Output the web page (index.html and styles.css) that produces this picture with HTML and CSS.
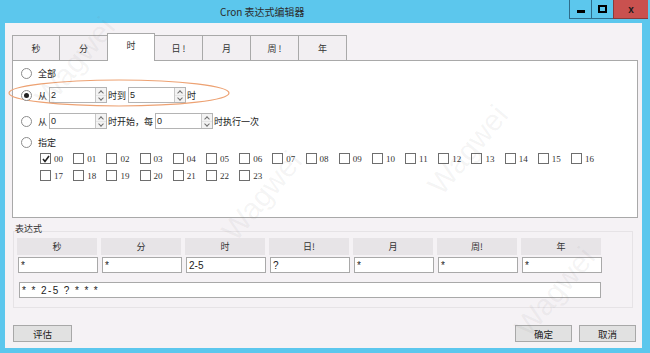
FILE: index.html
```html
<!DOCTYPE html>
<html lang="zh">
<head>
  <meta charset="UTF-8" />
  <title>Cron 表达式编辑器</title>
  <link rel="stylesheet" href="styles.css">
</head>
<body>
  <div class="window">
    <div class="titlebar">
      <span class="title">Cron 表达式编辑器</span>
      <div class="controls">
        <span class="ctl">
          <svg width="8" height="8" viewBox="0 0 8 8"><rect x="0" y="5" width="8" height="3" fill="#000"/></svg>
        </span>
        <span class="ctl">
          <svg width="9" height="8" viewBox="0 0 9 8"><rect x="1" y="1" width="7" height="6" fill="none" stroke="#000" stroke-width="2"/></svg>
        </span>
        <span class="ctl ctl-close">x</span>
      </div>
    </div>

    <div class="client">
      <div class="tabs">
        <div class="tab">秒</div>
        <div class="tab">分</div>
        <div class="tab active">时</div>
        <div class="tab">日 !</div>
        <div class="tab">月</div>
        <div class="tab">周 !</div>
        <div class="tab">年</div>
      </div>

      <div class="panel">
        <svg class="mark" width="224" height="30" viewBox="0 0 224 30">
          <ellipse cx="112" cy="15" rx="110" ry="13" fill="none" stroke="#eda273" stroke-width="1.2"/>
        </svg>

        <div class="row row-all">
          <span class="radio"></span>
          <span class="lbl">全部</span>
        </div>

        <div class="row row-range">
          <span class="radio checked"></span>
          <span class="lbl">从</span>
          <span class="spin"><span class="spin-val">2</span><span class="spin-btn"></span></span>
          <span class="lbl">时到</span>
          <span class="spin"><span class="spin-val">5</span><span class="spin-btn"></span></span>
          <span class="lbl">时</span>
        </div>

        <div class="row row-step">
          <span class="radio"></span>
          <span class="lbl">从</span>
          <span class="spin"><span class="spin-val">0</span><span class="spin-btn"></span></span>
          <span class="lbl">时开始，每</span>
          <span class="spin"><span class="spin-val">0</span><span class="spin-btn"></span></span>
          <span class="lbl">时执行一次</span>
        </div>

        <div class="row row-pick">
          <span class="radio"></span>
          <span class="lbl">指定</span>
        </div>

        <div class="checks">
          <label class="chk"><span class="box on"><svg width="8" height="8" viewBox="0 0 8 8"><path d="M1 4 L3 6.5 L7 1" fill="none" stroke="#222" stroke-width="1.6"/></svg></span>00</label>
          <label class="chk"><span class="box"></span>01</label>
          <label class="chk"><span class="box"></span>02</label>
          <label class="chk"><span class="box"></span>03</label>
          <label class="chk"><span class="box"></span>04</label>
          <label class="chk"><span class="box"></span>05</label>
          <label class="chk"><span class="box"></span>06</label>
          <label class="chk"><span class="box"></span>07</label>
          <label class="chk"><span class="box"></span>08</label>
          <label class="chk"><span class="box"></span>09</label>
          <label class="chk"><span class="box"></span>10</label>
          <label class="chk"><span class="box"></span>11</label>
          <label class="chk"><span class="box"></span>12</label>
          <label class="chk"><span class="box"></span>13</label>
          <label class="chk"><span class="box"></span>14</label>
          <label class="chk"><span class="box"></span>15</label>
          <label class="chk"><span class="box"></span>16</label>
          <label class="chk"><span class="box"></span>17</label>
          <label class="chk"><span class="box"></span>18</label>
          <label class="chk"><span class="box"></span>19</label>
          <label class="chk"><span class="box"></span>20</label>
          <label class="chk"><span class="box"></span>21</label>
          <label class="chk"><span class="box"></span>22</label>
          <label class="chk"><span class="box"></span>23</label>
        </div>
      </div>

      <div class="exp-label">表达式</div>
      <div class="group">
        <div class="cells">
          <div class="head">秒</div>
          <div class="head">分</div>
          <div class="head">时</div>
          <div class="head">日!</div>
          <div class="head">月</div>
          <div class="head">周!</div>
          <div class="head">年</div>
        </div>
        <div class="cells">
          <div class="field">*</div>
          <div class="field">*</div>
          <div class="field">2-5</div>
          <div class="field">?</div>
          <div class="field">*</div>
          <div class="field">*</div>
          <div class="field">*</div>
        </div>
        <div class="field full">* * 2-5 ? * * *</div>
      </div>

      <div class="buttons">
        <button class="btn">评估</button>
        <div class="right-btns">
          <button class="btn">确定</button>
          <button class="btn">取消</button>
        </div>
      </div>
    </div>

    <!-- faint watermark over the screenshot -->
    <span class="wm wm-1">Wagwei</span>
    <span class="wm wm-2">Wagwei</span>
    <span class="wm wm-3">Wagwei</span>
    <span class="wm wm-4">Wagwei</span>
  </div>
</body>
</html>
```

FILE: styles.css
```css
body {
  margin: 0;
  font-family: "Noto Sans CJK SC", "Liberation Sans", sans-serif;
  font-size: 9px;
  color: #222;
}
.window {
  position: relative;
  width: 650px;
  height: 353px;
  background-color: #5cc7ed;
  display: flex;
  flex-direction: column;
  overflow: hidden;
}
.titlebar {
  height: 23px;
  display: flex;
  align-items: flex-start;
}
.title {
  margin-left: 220px;
  margin-top: 5px;
  font-size: 10px;
  line-height: 14px;
  color: #2b2b2b;
}
.controls {
  margin-left: auto;
  margin-right: 2px;
  display: flex;
  height: 19px;
}
.ctl {
  width: 22px;
  height: 19px;
  box-sizing: border-box;
  border: 1px solid #2f6c8a;
  border-top: none;
  border-right: none;
  display: flex;
  align-items: center;
  justify-content: center;
}
.ctl-close {
  width: 35px;
  background-color: #c9514f;
  color: #1a1a1a;
  font-family: "Liberation Sans", sans-serif;
  font-weight: bold;
  font-size: 10px;
  border-color: #8a3a3a;
}
.client {
  flex: 1;
  margin: 0 8px 5px 5px;
  background-color: #f5f2f5;
  padding: 0 4px 0 7px;
  display: flex;
  flex-direction: column;
}
.tabs {
  display: flex;
  align-items: flex-end;
  height: 25px;
  margin-top: 12px;
}
.tab {
  width: 48px;
  height: 25px;
  box-sizing: border-box;
  border: 1px solid #a9a9a9;
  border-left: none;
  border-bottom: none;
  background-color: #f2eff2;
  display: flex;
  align-items: center;
  justify-content: center;
  color: #333;
}
.tab:first-child {
  border-left: 1px solid #a9a9a9;
}
.tab.active {
  height: 28px;
  background: white;
  margin-bottom: -1px;
  position: relative;
  z-index: 1;
  border-left: 1px solid #a9a9a9;
  margin-left: -1px;
  padding-bottom: 4px;
}
.panel {
  position: relative;
  height: 158px;
  box-sizing: border-box;
  border: 1px solid #a9a9a9;
  background: white;
  padding: 3px 0 0 8px;
}
.mark {
  position: absolute;
  left: -6px;
  top: 17px;
}
.row {
  display: flex;
  align-items: center;
  height: 18px;
}
.row-range { margin-top: 4px; }
.row-step { margin-top: 8px; }
.row-pick { margin-top: 3px; }
.radio {
  width: 9px;
  height: 9px;
  border: 1px solid #8c8c8c;
  border-radius: 50%;
  margin-right: 5px;
  position: relative;
  background: white;
}
.radio.checked::after {
  content: "";
  position: absolute;
  left: 2px;
  top: 2px;
  width: 5px;
  height: 5px;
  border-radius: 50%;
  background: #222;
}
.lbl {
  margin: 0 2px 0 1px;
}
.spin {
  width: 58px;
  height: 16px;
  box-sizing: border-box;
  border: 1px solid #b4b4b4;
  display: flex;
  background: white;
}
.spin-val {
  flex: 1;
  font-family: "Liberation Sans", sans-serif;
  font-size: 9px;
  line-height: 14px;
  padding-left: 1px;
}
.spin-btn {
  width: 10px;
  border-left: 1px solid #c8c8c8;
  background:
    linear-gradient(#e6e6e6, #e6e6e6) center / 10px 1px no-repeat,
    #f3f3f3;
  position: relative;
}
.spin-btn::before,
.spin-btn::after {
  content: "";
  position: absolute;
  left: 3px;
  width: 3px;
  height: 3px;
  border: solid #707070;
  border-width: 1px 0 0 1px;
}
.spin-btn::before {
  top: 3px;
  transform: rotate(45deg);
}
.spin-btn::after {
  top: 8px;
  transform: rotate(225deg);
}
.checks {
  display: grid;
  grid-template-columns: repeat(17, 33.2px);
  grid-auto-rows: 17px;
  margin-left: 19px;
  margin-top: -1px;
}
.chk {
  display: flex;
  align-items: center;
  font-family: "Liberation Serif", serif;
  font-size: 9px;
  color: #333;
}
.box {
  width: 9px;
  height: 9px;
  border: 1px solid #6e6e6e;
  background: white;
  margin-right: 3px;
  display: flex;
  align-items: center;
  justify-content: center;
}
.exp-label {
  margin-top: 5px;
  margin-left: 3px;
  line-height: 12px;
  color: #333;
  position: relative;
  z-index: 1;
}
.group {
  margin-top: -4px;
  width: 620px;
  box-sizing: border-box;
  border: 1px solid #e6e3e6;
  padding: 6px 0 9px 3px;
  margin-left: 1px;
}
.cells {
  display: flex;
  gap: 4px;
}
.cells + .cells {
  margin-top: 2px;
}
.head {
  width: 80px;
  height: 17px;
  background-color: #e7e4e7;
  display: flex;
  align-items: center;
  justify-content: center;
  color: #333;
}
.field {
  width: 80px;
  height: 16px;
  box-sizing: border-box;
  border: 1px solid #a9a9a9;
  background: white;
  font-family: "Liberation Sans", sans-serif;
  font-size: 10px;
  line-height: 15px;
  padding-left: 2px;
  margin-left: 1px;
  margin-right: -1px;
}
.field.full {
  width: 582px;
  margin-top: 9px;
  margin-left: 2px;
  letter-spacing: 1.4px;
}
.buttons {
  display: flex;
  margin-top: 17px;
  margin-left: 1px;
}
.right-btns {
  margin-left: auto;
  display: flex;
  gap: 7px;
  margin-right: 2px;
}
.btn {
  width: 59px;
  height: 17px;
  box-sizing: border-box;
  border: 1px solid #a8a8a8;
  background-color: #e1e1e1;
  font-family: "Noto Sans CJK SC", sans-serif;
  font-size: 9.5px;
  color: #222;
  padding: 0;
}
.right-btns .btn {
  width: 57px;
}
.wm {
  position: absolute;
  font-family: "Liberation Sans", sans-serif;
  font-size: 30px;
  color: rgba(110, 110, 110, 0.07);
  transform: translate(-50%, -50%) rotate(-50deg);
  pointer-events: none;
  white-space: nowrap;
}
.wm-1 { left: 75px; top: 62px; }
.wm-2 { left: 262px; top: 196px; }
.wm-3 { left: 468px; top: 150px; }
.wm-4 { left: 555px; top: 292px; }
```
